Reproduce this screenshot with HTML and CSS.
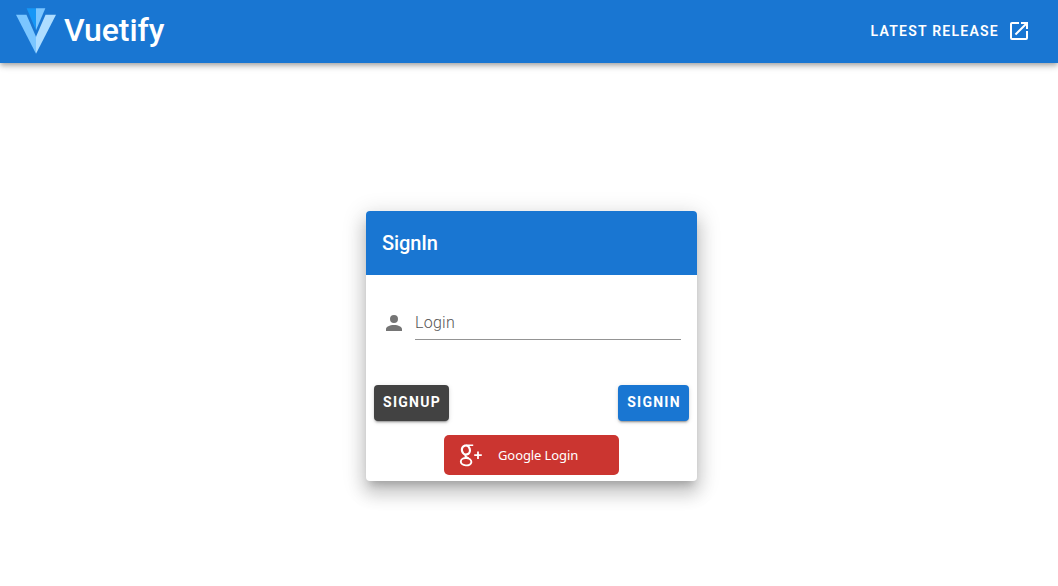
FILE: index.html
```html
<!DOCTYPE html>
<html lang="en">
<head>
    <meta charset="UTF-8">
    <meta name="viewport" content="width=device-width, initial-scale=1.0">
    <title>Vuetify - SignIn</title>
    <link rel="stylesheet" href="styles.css">
</head>
<body>
    <header class="app-bar">
        <a class="brand" href="#">
            <svg class="brand-logo" viewBox="0 0 87.5 100">
                <path fill="#1697f6" d="M43.75 0H23.31L43.75 48.32z"/>
                <path fill="#7bc6ff" d="M43.75 62.5V100L0 14.58h22.92z"/>
                <path fill="#7bc6ff" d="M43.75 0h20.44L43.75 48.32z"/>
                <path fill="#aeddff" d="M64.58 14.58H87.5L43.75 100V62.5z"/>
            </svg>
            <span class="brand-name">Vuetify</span>
        </a>
        <a class="release-link" href="#">
            <span>Latest Release</span>
            <svg class="icon" viewBox="0 0 24 24"><path d="M14,3V5H17.59L7.76,14.83L9.17,16.24L19,6.41V10H21V3M19,19H5V5H12V3H5C3.89,3 3,3.9 3,5V19A2,2 0 0,0 5,21H19A2,2 0 0,0 21,19V12H19V19Z"/></svg>
        </a>
    </header>

    <main class="content">
        <form class="card">
            <h1 class="card-title">SignIn</h1>

            <div class="field">
                <svg class="icon" viewBox="0 0 24 24"><path d="M12,4A4,4 0 0,1 16,8A4,4 0 0,1 12,12A4,4 0 0,1 8,8A4,4 0 0,1 12,4M12,14C16.42,14 20,15.79 20,18V20H4V18C4,15.79 7.58,14 12,14Z"/></svg>
                <input type="text" name="login" placeholder="Login" aria-label="Login">
            </div>

            <div class="actions">
                <button type="button" class="button dark">Signup</button>
                <button type="button" class="button primary">Signin</button>
            </div>

            <button type="button" class="google-button">
                <svg class="google-icon" viewBox="0 0 24 24">
                    <g fill="none" stroke="#fff">
                        <ellipse cx="6.9" cy="7" rx="4" ry="4.5" stroke-width="2.2" transform="rotate(-14 6.9 7)"/>
                        <path stroke-width="1.4" d="M6.8 2.3H14.2"/>
                        <path stroke-width="2" d="M7 11.6C5.4 13.2 7 14 9.6 15.4"/>
                        <ellipse cx="7.1" cy="18.7" rx="5.3" ry="3.7" stroke-width="1.9" transform="rotate(5 7.1 18.7)"/>
                        <path stroke-width="1.8" d="M19 8.4v7.6M15.2 12.2h7.6"/>
                    </g>
                </svg>
                <span>Google Login</span>
            </button>
        </form>
    </main>
</body>
</html>
```
FILE: styles.css
```css
:root {
    --primary-color: #1976d2;
    --dark-color: #424242;
    --google-color: #cb3530;
}

* {
    margin: 0;
    padding: 0;
    box-sizing: border-box;
}

body {
    min-height: 100vh;
    display: flex;
    flex-direction: column;
    font-family: Roboto, sans-serif;
    background: #fff;
}

.app-bar {
    height: 63px;
    padding: 0 27px 1px 16px;
    display: flex;
    align-items: center;
    justify-content: space-between;
    background: var(--primary-color);
    box-shadow: 0 2px 4px -1px rgba(0,0,0,0.2), 0 4px 5px 0 rgba(0,0,0,0.14), 0 1px 10px 0 rgba(0,0,0,0.12);
}

.brand,
.release-link {
    display: flex;
    align-items: center;
    color: #fff;
    text-decoration: none;
}

.brand-logo {
    width: 40px;
    height: 46px;
    margin-right: 8px;
}

.brand-name {
    margin-top: -2px;
    font-size: 32px;
    font-weight: 500;
    letter-spacing: -0.1px;
}

.release-link {
    gap: 8px;
    font-size: 14px;
    font-weight: 600;
    letter-spacing: 1.25px;
    text-transform: uppercase;
}

.icon {
    width: 24px;
    height: 24px;
    fill: currentColor;
}

.content {
    flex: 1;
    display: flex;
    align-items: center;
    justify-content: center;
    padding: 43px 0 0 5px;
}

.card {
    width: 331px;
    height: 270px;
    border-radius: 4px;
    background: #fff;
    overflow: hidden;
    box-shadow: 0 7px 8px -4px rgba(0,0,0,0.2), 0 12px 17px 2px rgba(0,0,0,0.14), 0 5px 22px 4px rgba(0,0,0,0.12);
}

.card-title {
    height: 64px;
    padding: 0 16px;
    color: #fff;
    font-size: 20px;
    font-weight: 500;
    letter-spacing: -0.1px;
    line-height: 64px;
    background: var(--primary-color);
}

.field {
    display: flex;
    gap: 9px;
    padding: 32px 16px 0;
    color: #757575;
}

.field .icon {
    margin-top: 4px;
}

.field input {
    flex: 1;
    min-width: 0;
    height: 33px;
    padding-bottom: 2px;
    border: none;
    border-bottom: 1px solid #949494;
    outline: none;
    font-family: inherit;
    font-size: 16px;
    font-weight: 300;
    letter-spacing: 0.25px;
    background: none;
}

.field input::placeholder {
    color: #555;
}

.actions {
    display: flex;
    justify-content: space-between;
    padding: 45px 8px 14px;
}

.button {
    height: 36px;
    padding: 0 8px 2px 9px;
    border: none;
    border-radius: 4px;
    color: #fff;
    font-family: inherit;
    font-size: 14px;
    font-weight: 700;
    letter-spacing: 1.25px;
    text-transform: uppercase;
    cursor: pointer;
    box-shadow: 0 3px 1px -2px rgba(0,0,0,0.2), 0 2px 2px 0 rgba(0,0,0,0.14), 0 1px 5px 0 rgba(0,0,0,0.12);
}

.dark {
    width: 75px;
    background: var(--dark-color);
}

.primary {
    width: 71px;
    background: var(--primary-color);
}

.google-button {
    width: 175px;
    height: 40px;
    margin: 0 auto;
    padding-left: 15px;
    display: flex;
    align-items: center;
    gap: 15px;
    border: none;
    border-radius: 5px;
    color: #fff;
    font-family: "Noto Sans", sans-serif;
    font-size: 13px;
    letter-spacing: -0.1px;
    background: var(--google-color);
    cursor: pointer;
}

.google-icon {
    width: 24px;
    height: 24px;
}
```
